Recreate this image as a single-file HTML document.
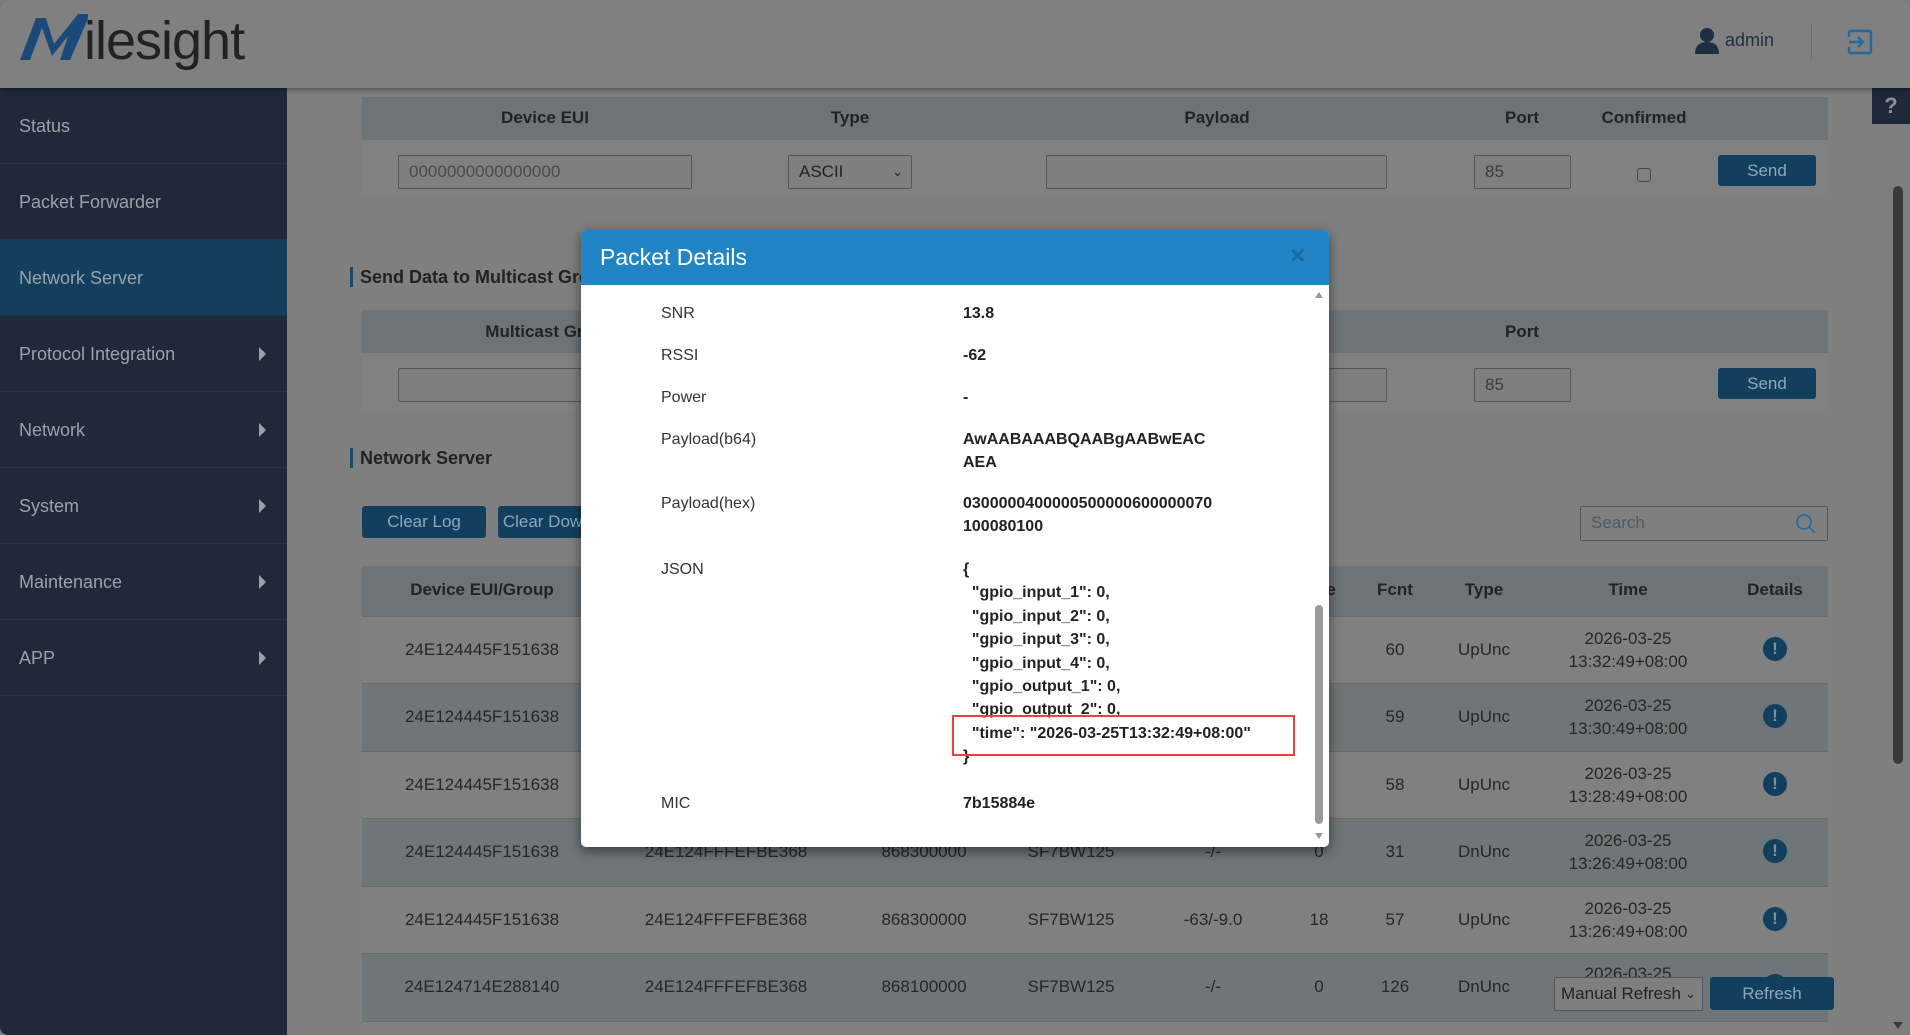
<!DOCTYPE html>
<html style="background:#7f7f7f;overflow:hidden;height:1035px"><head><meta charset="utf-8">
<style>
*{margin:0;padding:0;box-sizing:border-box}
body{width:1910px;height:1035px;overflow:hidden;background:#7f7f7f;font-family:"Liberation Sans",sans-serif;color:#222;position:relative}
.a{position:absolute}
.hdr{left:0;top:0;width:1910px;height:88px;background:#808080;border-radius:10px 10px 0 0;box-shadow:0 2px 4px rgba(0,0,0,.35);z-index:2}
.side{left:0;top:88px;width:287px;height:947px;background:#1e293a;border-bottom-left-radius:8px}
.si{position:absolute;left:0;width:287px;height:76px;border-bottom:1px solid #243246;color:#9ba1a9;font-size:18px;line-height:76px;padding-left:19px}
.si .ar{position:absolute;right:21px;top:31px;width:0;height:0;border-left:7px solid #9ba1a9;border-top:7px solid transparent;border-bottom:7px solid transparent}
.th{background:#6c7478}
.c{position:absolute;text-align:center;width:200px;font-size:17px;color:#262626}
.b{font-weight:bold;font-size:17px;color:#222}
.inp{position:absolute;border:1px solid #555;border-radius:2px;background:#7f7f7f;font-size:17px;color:#3a3a3a;padding-left:10px;line-height:32px}
.btn{position:absolute;background:#123f5e;color:#8ea8bd;font-size:17px;text-align:center;border-radius:3px}
.ttl{position:absolute;font-weight:bold;font-size:18px;color:#222;border-left:3px solid #134a70;padding-left:7px;line-height:20px}
.row{position:absolute;left:362px;width:1466px;height:68px;border-top:1px solid #6a6a6a}
.ic{position:absolute;width:24px;height:24px;border-radius:50%;background:#123f5e;color:#7f8f9c;font-weight:bold;font-size:17px;text-align:center;line-height:24px}
.modal{left:581px;top:230px;width:748px;height:617px;background:#fff;border-radius:5px;overflow:hidden;box-shadow:0 4px 12px rgba(0,0,0,.5);z-index:5}
.mh{position:absolute;left:0;top:0;width:748px;height:55px;background:#2185c5}
.lb{position:absolute;left:80px;font-size:16px;color:#333}
.vl{position:absolute;left:382px;font-size:16px;font-weight:bold;color:#222;line-height:23.4px}
</style></head><body>
<div class="a hdr">
 <svg class="a" style="left:18px;top:12px" width="70" height="50" viewBox="0 0 70 50"><path d="M2 48L18 6H28L36 32L60 2H72L52 48H42L50 24L34 44L24 16L12 48Z" fill="#1b4a7a"/></svg>
 <div class="a" style="left:84px;top:10px;font-size:54px;color:#222;letter-spacing:-1px">ilesight</div>
 <svg class="a" style="left:1694px;top:27px" width="26" height="27" viewBox="0 0 26 27"><circle cx="13" cy="8" r="7" fill="#1e2f44"/><path d="M1 27 Q1 15 13 15 Q25 15 25 27Z" fill="#1e2f44"/></svg>
 <div class="a" style="left:1725px;top:30px;font-size:18px;color:#1e2f44">admin</div>
 <div class="a" style="left:1811px;top:23px;width:1px;height:37px;background:#6f6f6f"></div>
 <svg class="a" style="left:1846px;top:28px" width="28" height="28" viewBox="0 0 28 28"><path d="M3 9V5Q3 3 5 3H23Q25 3 25 5V23Q25 25 23 25H5Q3 25 3 23V19" fill="none" stroke="#1f6b9e" stroke-width="2.4"/><path d="M3 14H17M12 9L17 14L12 19" fill="none" stroke="#1f6b9e" stroke-width="2.4"/></svg>
</div>
<div class="a" style="left:1872px;top:88px;width:38px;height:36px;background:#1e293a;color:#8a9098;font-weight:bold;font-size:22px;text-align:center;line-height:36px">?</div>
<div class="a side">
 <div class="si" style="top:0">Status</div>
 <div class="si" style="top:76px">Packet Forwarder</div>
 <div class="si" style="top:152px;background:#123f5e">Network Server</div>
 <div class="si" style="top:228px">Protocol Integration<span class="ar"></span></div>
 <div class="si" style="top:304px">Network<span class="ar"></span></div>
 <div class="si" style="top:380px">System<span class="ar"></span></div>
 <div class="si" style="top:456px">Maintenance<span class="ar"></span></div>
 <div class="si" style="top:532px">APP<span class="ar"></span></div>
</div>
<div class="a th" style="left:362px;top:97px;width:1466px;height:43px"></div>
<div class="a" style="left:362px;top:144px;width:1466px;height:51px;background:#818181"></div>
<div class="c b" style="left:445px;top:108px">Device EUI</div>
<div class="c b" style="left:750px;top:108px">Type</div>
<div class="c b" style="left:1117px;top:108px">Payload</div>
<div class="c b" style="left:1422px;top:108px">Port</div>
<div class="c b" style="left:1544px;top:108px">Confirmed</div>
<div class="inp" style="left:398px;top:155px;width:294px;height:34px;color:#4a4a4a">0000000000000000</div>
<div class="inp" style="left:788px;top:155px;width:124px;height:34px;color:#222">ASCII<span style="position:absolute;right:8px;top:0;font-size:13px">&#8964;</span></div>
<div class="inp" style="left:1046px;top:155px;width:341px;height:34px"></div>
<div class="inp" style="left:1474px;top:155px;width:97px;height:34px">85</div>
<div class="a" style="left:1637px;top:168px;width:14px;height:14px;border:1px solid #444;border-radius:3px"></div>
<div class="btn" style="left:1718px;top:155px;width:98px;height:31px;line-height:31px">Send</div>
<div class="ttl" style="left:350px;top:267px">Send Data to Multicast Group</div>
<div class="a th" style="left:362px;top:310px;width:1466px;height:43px"></div>
<div class="a" style="left:362px;top:357px;width:1466px;height:55px;background:#818181"></div>
<div class="c b" style="left:450px;top:322px">Multicast Group</div>
<div class="c b" style="left:1422px;top:322px">Port</div>
<div class="inp" style="left:398px;top:368px;width:989px;height:34px"></div>
<div class="inp" style="left:1474px;top:368px;width:97px;height:34px">85</div>
<div class="btn" style="left:1718px;top:368px;width:98px;height:31px;line-height:31px">Send</div>
<div class="ttl" style="left:350px;top:448px">Network Server</div>
<div class="btn" style="left:362px;top:506px;width:124px;height:32px;line-height:32px">Clear Log</div>
<div class="btn" style="left:498px;top:506px;width:124px;height:32px;line-height:32px">Clear Downlink</div>
<div class="inp" style="left:1580px;top:506px;width:248px;height:35px;color:#4e5a63">Search<svg style="position:absolute;right:10px;top:6px" width="22" height="22" viewBox="0 0 22 22"><circle cx="9" cy="9" r="7" fill="none" stroke="#1f6b9e" stroke-width="1.6"/><path d="M14 14L20 20" stroke="#1f6b9e" stroke-width="1.6"/></svg></div>
<div class="a th" style="left:362px;top:566px;width:1466px;height:50px"></div>
<div class="c b" style="left:382px;top:580px">Device EUI/Group</div>
<div class="c b" style="left:626px;top:580px">Gateway EUI</div>
<div class="c b" style="left:824px;top:580px">Frequency</div>
<div class="c b" style="left:971px;top:580px">Datarate</div>
<div class="c b" style="left:1113px;top:580px">RSSI/SNR</div>
<div class="c b" style="left:1219px;top:580px">Size</div>
<div class="c b" style="left:1295px;top:580px">Fcnt</div>
<div class="c b" style="left:1384px;top:580px">Type</div>
<div class="c b" style="left:1528px;top:580px">Time</div>
<div class="c b" style="left:1675px;top:580px">Details</div>

<div class="row" style="top:616px;background:#808080"></div>
<div class="row" style="top:683px;background:#6e7679"></div>
<div class="row" style="top:751px;background:#808080"></div>
<div class="row" style="top:818px;background:#6e7679"></div>
<div class="row" style="top:886px;background:#808080"></div>
<div class="row" style="top:953px;background:#6e7679"></div>
<div class="row" style="top:1021px;height:14px;background:#808080"></div>

<div class="c" style="left:382px;top:640px">24E124445F151638</div><div class="c" style="left:1295px;top:640px">60</div><div class="c" style="left:1384px;top:640px">UpUnc</div><div class="c" style="left:1528px;top:627px;line-height:23px">2026-03-25<br>13:32:49+08:00</div><div class="ic" style="left:1763px;top:637px">!</div>
<div class="c" style="left:382px;top:707px">24E124445F151638</div><div class="c" style="left:1295px;top:707px">59</div><div class="c" style="left:1384px;top:707px">UpUnc</div><div class="c" style="left:1528px;top:694px;line-height:23px">2026-03-25<br>13:30:49+08:00</div><div class="ic" style="left:1763px;top:704px">!</div>
<div class="c" style="left:382px;top:775px">24E124445F151638</div><div class="c" style="left:1295px;top:775px">58</div><div class="c" style="left:1384px;top:775px">UpUnc</div><div class="c" style="left:1528px;top:762px;line-height:23px">2026-03-25<br>13:28:49+08:00</div><div class="ic" style="left:1763px;top:772px">!</div>
<div class="c" style="left:382px;top:842px">24E124445F151638</div><div class="c" style="left:626px;top:842px">24E124FFFEFBE368</div><div class="c" style="left:824px;top:842px">868300000</div><div class="c" style="left:971px;top:842px">SF7BW125</div><div class="c" style="left:1113px;top:842px">-/-</div><div class="c" style="left:1219px;top:842px">0</div><div class="c" style="left:1295px;top:842px">31</div><div class="c" style="left:1384px;top:842px">DnUnc</div><div class="c" style="left:1528px;top:829px;line-height:23px">2026-03-25<br>13:26:49+08:00</div><div class="ic" style="left:1763px;top:839px">!</div>
<div class="c" style="left:382px;top:910px">24E124445F151638</div><div class="c" style="left:626px;top:910px">24E124FFFEFBE368</div><div class="c" style="left:824px;top:910px">868300000</div><div class="c" style="left:971px;top:910px">SF7BW125</div><div class="c" style="left:1113px;top:910px">-63/-9.0</div><div class="c" style="left:1219px;top:910px">18</div><div class="c" style="left:1295px;top:910px">57</div><div class="c" style="left:1384px;top:910px">UpUnc</div><div class="c" style="left:1528px;top:897px;line-height:23px">2026-03-25<br>13:26:49+08:00</div><div class="ic" style="left:1763px;top:907px">!</div>
<div class="c" style="left:382px;top:977px">24E124714E288140</div><div class="c" style="left:626px;top:977px">24E124FFFEFBE368</div><div class="c" style="left:824px;top:977px">868100000</div><div class="c" style="left:971px;top:977px">SF7BW125</div><div class="c" style="left:1113px;top:977px">-/-</div><div class="c" style="left:1219px;top:977px">0</div><div class="c" style="left:1295px;top:977px">126</div><div class="c" style="left:1384px;top:977px">DnUnc</div><div class="c" style="left:1528px;top:964px">2026-03-25</div><div class="ic" style="left:1763px;top:974px">!</div>

<div class="inp" style="left:1554px;top:977px;width:149px;height:34px;color:#222;background:#7f7f7f;padding-left:6px">Manual Refresh<span style="position:absolute;right:6px;top:0;font-size:13px">&#8964;</span></div>
<div class="btn" style="left:1710px;top:977px;width:124px;height:33px;line-height:33px">Refresh</div>
<div class="a" style="left:1893px;top:186px;width:10px;height:578px;background:#3a3a3a;border-radius:5px"></div>
<div class="a" style="left:1893px;top:1022px;width:0;height:0;border-left:5px solid transparent;border-right:5px solid transparent;border-top:7px solid #3a3a3a"></div>

<div class="a modal">
 <div class="mh"><div class="a" style="left:19px;top:14px;font-size:23px;color:#fff">Packet Details</div><div class="a" style="left:709px;top:10px;font-size:26px;color:#1a6aa3;font-weight:bold">&#215;</div></div>
 <div class="lb" style="top:75px">SNR</div><div class="vl" style="top:72px">13.8</div>
 <div class="lb" style="top:117px">RSSI</div><div class="vl" style="top:114px">-62</div>
 <div class="lb" style="top:159px">Power</div><div class="vl" style="top:156px">-</div>
 <div class="lb" style="top:201px">Payload(b64)</div><div class="vl" style="top:198px">AwAABAAABQAABgAABwEAC<br>AEA</div>
 <div class="lb" style="top:265px">Payload(hex)</div><div class="vl" style="top:262px">0300000400000500000600000070<br>100080100</div>
 <div class="lb" style="top:331px">JSON</div>
 <div class="vl" style="top:328px;white-space:pre">{
  "gpio_input_1": 0,
  "gpio_input_2": 0,
  "gpio_input_3": 0,
  "gpio_input_4": 0,
  "gpio_output_1": 0,
  "gpio_output_2": 0,
  "time": "2026-03-25T13:32:49+08:00"
}</div>
 <div class="a" style="left:371px;top:485px;width:343px;height:41px;border:2px solid #e8423b"></div>
 <div class="lb" style="top:565px">MIC</div><div class="vl" style="top:562px">7b15884e</div>
 <div class="a" style="left:734px;top:62px;width:0;height:0;border-left:4px solid transparent;border-right:4px solid transparent;border-bottom:6px solid #999"></div>
 <div class="a" style="left:734px;top:375px;width:8px;height:219px;background:#9a9a9a;border-radius:4px"></div>
 <div class="a" style="left:734px;top:603px;width:0;height:0;border-left:4px solid transparent;border-right:4px solid transparent;border-top:6px solid #999"></div>
</div>
</body></html>
